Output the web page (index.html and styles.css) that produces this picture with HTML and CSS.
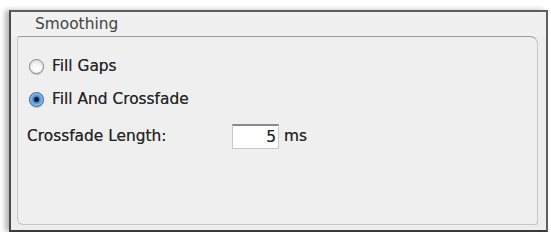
FILE: index.html
```html
<!DOCTYPE html>
<html>
<head>
    <title>Smoothing</title>
    <link rel="stylesheet" href="styles.css">
</head>
<body>
    <div class="panel">
        <div class="panel-title">Smoothing</div>

        <div class="group">
            <label class="option">
                <span class="radio"></span>
                <span>Fill Gaps</span>
            </label>

            <label class="option second">
                <span class="radio checked"></span>
                <span>Fill And Crossfade</span>
            </label>

            <div class="length-row">
                <span class="length-label">Crossfade Length:</span>
                <span class="length-field">5</span>
                <span class="unit">ms</span>
            </div>
        </div>
    </div>
</body>
</html>
```

FILE: styles.css
```css
body {
    margin: 0;
    background-color: #ffffff;
    font-family: "DejaVu Sans", "Liberation Sans", sans-serif;
    font-size: 15.4px;
    color: #262626;
}
.panel {
    box-sizing: border-box;
    width: 539px;
    height: 222px;
    margin: 10px 0 0 9px;
    border: 2px solid #5e5e5e;
    border-left-color: #4a4a4a;
    border-bottom-color: #3a3a3a;
    background-color: #ededed;
    box-shadow: -4px 0 5px rgba(0, 0, 0, 0.28);
    display: flex;
    flex-direction: column;
}
.panel-title {
    height: 24px;
    line-height: 24px;
    padding-left: 24px;
    color: #444444;
    background-color: #f0f0f0;
}
.group {
    flex: 1;
    margin: 0 8px 5px 6px;
    padding: 18px 0 0 0;
    border: 1px solid #c6c6c6;
    border-top-color: #9a9a9a;
    border-radius: 3px 8px 3px 6px;
    background-color: #efefef;
}
.option,
.length-row {
    text-shadow: 0 0 0.6px rgba(0, 0, 0, 0.6);
}
.option {
    display: flex;
    align-items: center;
    height: 22px;
    padding-left: 11px;
}
.option.second {
    margin-top: 11px;
}
.radio {
    box-sizing: border-box;
    width: 15px;
    height: 15px;
    margin-right: 8px;
    border: 1px solid #858585;
    border-radius: 50%;
    background: radial-gradient(circle at 50% 70%, #ffffff 0%, #f4f4f4 50%, #d2d2d2 100%);
    box-shadow: 0 1px 1px rgba(0, 0, 0, 0.2);
}
.radio.checked {
    border-color: #3a5a86;
    background: radial-gradient(circle at 50% 50%, #0b1a33 0%, #0b1a33 22%, #3f7fcc 32%, #8cc0f2 65%, #3c6eae 100%);
}
.length-row {
    display: flex;
    align-items: center;
    height: 26px;
    margin-top: 13px;
    padding-left: 9px;
}
.length-label {
    width: 205px;
}
.length-field {
    box-sizing: border-box;
    width: 47px;
    height: 25px;
    line-height: 23px;
    padding-right: 2px;
    text-align: right;
    background-color: #ffffff;
    border: 1px solid #c8c8c8;
    border-top: 2px solid #8a8a8a;
}
.unit {
    margin-left: 5px;
}
```
